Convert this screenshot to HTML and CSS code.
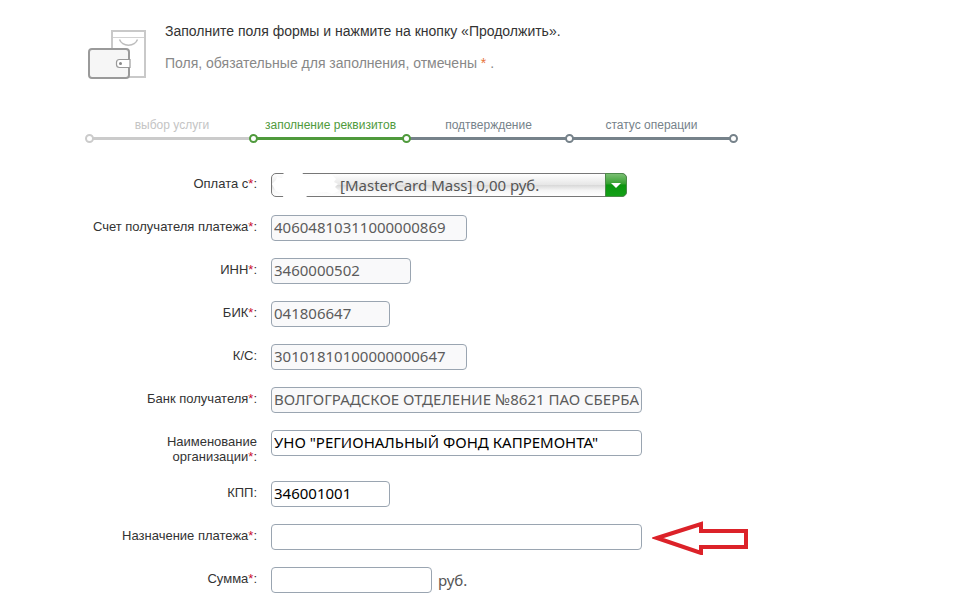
FILE: index.html
```
<!DOCTYPE html>
<html lang="ru">
<head>
    <meta charset="UTF-8">
    <meta name="viewport" content="width=device-width, initial-scale=1.0">
    <title>Оплата услуг</title>
    <link rel="stylesheet" href="styles.css">
</head>
<body>
    <main class="payment">
        <header class="intro">
            <svg class="intro-icon" width="60" height="52" viewBox="0 0 60 52" fill="none" aria-hidden="true">
                <path d="M24 2h33v46H24z" fill="#fff" stroke="#c9c9c9" stroke-width="2"/>
                <path d="M25 8.5h31" stroke="#d2d2d2"/>
                <path d="M31.5 10.5c3 7.500 15 7.500 18 0" stroke="#bdbdbd" stroke-width="1.5"/>
                <rect x="1" y="20" width="40" height="29" rx="3" fill="#f6f6f6" stroke="#9a9a9a" stroke-width="2"/>
                <path d="M42 30.500H31.500a3 3 0 0 0-3 3v2a3 3 0 0 0 3 3H42z" fill="#fff" stroke="#9a9a9a" stroke-width="1.2"/>
                <circle cx="32.5" cy="34.5" r="1.5" fill="#888"/>
            </svg>
            <div class="intro-text">
                <p class="intro-main">Заполните поля формы и нажмите на кнопку «Продолжить».</p>
                <p class="intro-note">Поля, обязательные для заполнения, отмечены <span class="star">*</span> .</p>
            </div>
        </header>

        <ol class="steps">
            <li class="step done">выбор услуги</li>
            <li class="step current">заполнение реквизитов</li>
            <li class="step">подтверждение</li>
            <li class="step last">статус операции</li>
        </ol>

        <form class="form">
            <div class="row">
                <label for="source">Оплата с<span class="req">*</span>:</label>
                <div class="select">
                    <select id="source">
                        <option>[MasterCard Mass] 0,00 руб.</option>
                    </select>
                    <svg class="select-mask" width="70" height="26" viewBox="0 0 70 26" aria-hidden="true">
                        <path d="M1 12l4-4 1-3 5 1 2-6h18l2 4 28-1 4 4-2 3 4 2-3 3 4 4-7 3-5-2-16 1-5 4-3 1H13l-3-5-5-2-2-3z" fill="#fff"/>
                    </svg>
                    <span class="select-arrow"></span>
                </div>
            </div>
            <div class="row">
                <label for="account">Счет получателя платежа<span class="req">*</span>:</label>
                <input class="medium" id="account" type="text" value="40604810311000000869" readonly>
            </div>
            <div class="row">
                <label for="inn">ИНН<span class="req">*</span>:</label>
                <input class="small" id="inn" type="text" value="3460000502" readonly>
            </div>
            <div class="row">
                <label for="bik">БИК<span class="req">*</span>:</label>
                <input class="tiny" id="bik" type="text" value="041806647" readonly>
            </div>
            <div class="row">
                <label for="corr">К/С:</label>
                <input class="medium" id="corr" type="text" value="30101810100000000647" readonly>
            </div>
            <div class="row">
                <label for="bank">Банк получателя<span class="req">*</span>:</label>
                <input class="wide" id="bank" type="text" value="ВОЛГОГРАДСКОЕ ОТДЕЛЕНИЕ №8621 ПАО СБЕРБАНК" readonly>
            </div>
            <div class="row">
                <label for="org">Наименование<br>организации<span class="req">*</span>:</label>
                <input class="wide" id="org" type="text" value='УНО "РЕГИОНАЛЬНЫЙ ФОНД КАПРЕМОНТА"'>
            </div>
            <div class="row">
                <label for="kpp">КПП:</label>
                <input class="tiny" id="kpp" type="text" value="346001001">
            </div>
            <div class="row">
                <label for="purpose">Назначение платежа<span class="req">*</span>:</label>
                <input class="wide" id="purpose" type="text">
                <svg class="pointer" width="98" height="36" viewBox="0 0 98 36" fill="none" aria-hidden="true">
                    <path d="M5 19L49 5v7h45v16H49v6z" fill="#fff" stroke="#dc2229" stroke-width="4"/>
                </svg>
            </div>
            <div class="row">
                <label for="sum">Сумма<span class="req">*</span>:</label>
                <input class="sum" id="sum" type="text">
                <span class="unit">руб.</span>
            </div>
        </form>
    </main>
</body>
</html>
```
FILE: styles.css
```
*,
*::before,
*::after {
    box-sizing: border-box;
}

body {
    margin: 0;
    background-color: #fff;
    font-family: "Liberation Sans", Arial, sans-serif;
    font-size: 13px;
    color: #333;
}

.payment {
    max-width: 800px;
    padding: 22px 16px 12px 88px;
}

.intro {
    display: flex;
    gap: 17px;
}

.intro-icon {
    flex: none;
    margin-top: 7px;
}

.intro p {
    margin: 0;
    font-size: 14px;
    line-height: 18px;
}

.intro .intro-note {
    margin-top: 14px;
    color: #888;
}

.star {
    color: #e8743b;
}

.steps {
    display: grid;
    grid-template-columns: 164fr 153fr 163fr 163fr;
    max-width: 643px;
    margin: 36px 0 0 2px;
    padding: 0;
    list-style: none;
}

.step {
    position: relative;
    padding-bottom: 4px;
    border-bottom: 3px solid #76828a;
    color: #76828a;
    font-size: 12px;
    line-height: 16px;
    text-align: center;
}

.step::before,
.step.last::after {
    content: "";
    position: absolute;
    z-index: 1;
    left: -5px;
    bottom: -6px;
    width: 9px;
    height: 9px;
    border: 2px solid #76828a;
    border-radius: 50%;
    background-color: #fff;
}

.step.last::after {
    left: auto;
    right: -5px;
}

.step.done {
    border-color: #cbcbcb;
    color: #c4c4c4;
}

.step.done::before {
    border-color: #cbcbcb;
}

.step.current {
    border-color: #4f9a3c;
    color: #4f9a3c;
}

.step.current::before,
.step.current + .step::before {
    border-color: #4f9a3c;
}

.form {
    display: flex;
    flex-direction: column;
    gap: 17px;
    margin-top: 32px;
}

.row {
    display: flex;
    align-items: flex-start;
    min-height: 26px;
}

.row label {
    flex: none;
    width: 169px;
    margin-right: 14px;
    padding-top: 4px;
    line-height: 15px;
    text-align: right;
}

.req {
    color: #c8102e;
}

.row input,
.row select,
.unit {
    font-family: "Noto Sans", "Open Sans", sans-serif;
    font-size: 15px;
}

.row input {
    min-width: 0;
    height: 26px;
    padding: 0 2px 2px;
    border: 1px solid #9aa5b1;
    border-radius: 4px;
    background-color: #fff;
    color: #000;
}

.row input[readonly] {
    background-color: #f9f9fa;
    color: #5c5c5c;
}

.row .tiny {
    width: 119px;
}

.row .small {
    width: 140px;
}

.row .sum {
    width: 161px;
}

.row .medium {
    width: 196px;
}

.row .wide {
    width: 371px;
}

.select {
    position: relative;
    width: 356px;
    padding-top: 1px;
}

.select select {
    display: block;
    width: 100%;
    height: 24px;
    padding: 0 24px 0 68px;
    appearance: none;
    border: 1px solid #777;
    border-radius: 5px;
    background: linear-gradient(#fff, #e6e6e6 50%, #d8d8d8 51%, #f6f6f6 75%, #fff);
    color: #555;
}

.select-mask {
    position: absolute;
    top: 0;
    left: 0;
    pointer-events: none;
}

.select-arrow {
    position: absolute;
    top: 1px;
    right: 0;
    width: 22px;
    height: 24px;
    border: 1px solid #4c8a4a;
    border-radius: 0 5px 5px 0;
    background: linear-gradient(#7abf72, #35a030 45%, #0c9510 50%, #12a016);
    pointer-events: none;
}

.select-arrow::before {
    content: "";
    position: absolute;
    top: 9px;
    left: 5px;
    border: 5px solid transparent;
    border-top-color: #fff;
    border-bottom: 0;
}

.pointer {
    flex: none;
    align-self: center;
    margin: -5px 0 -5px 10px;
}

.unit {
    margin-left: 6px;
    line-height: 26px;
    color: #555;
}
```
